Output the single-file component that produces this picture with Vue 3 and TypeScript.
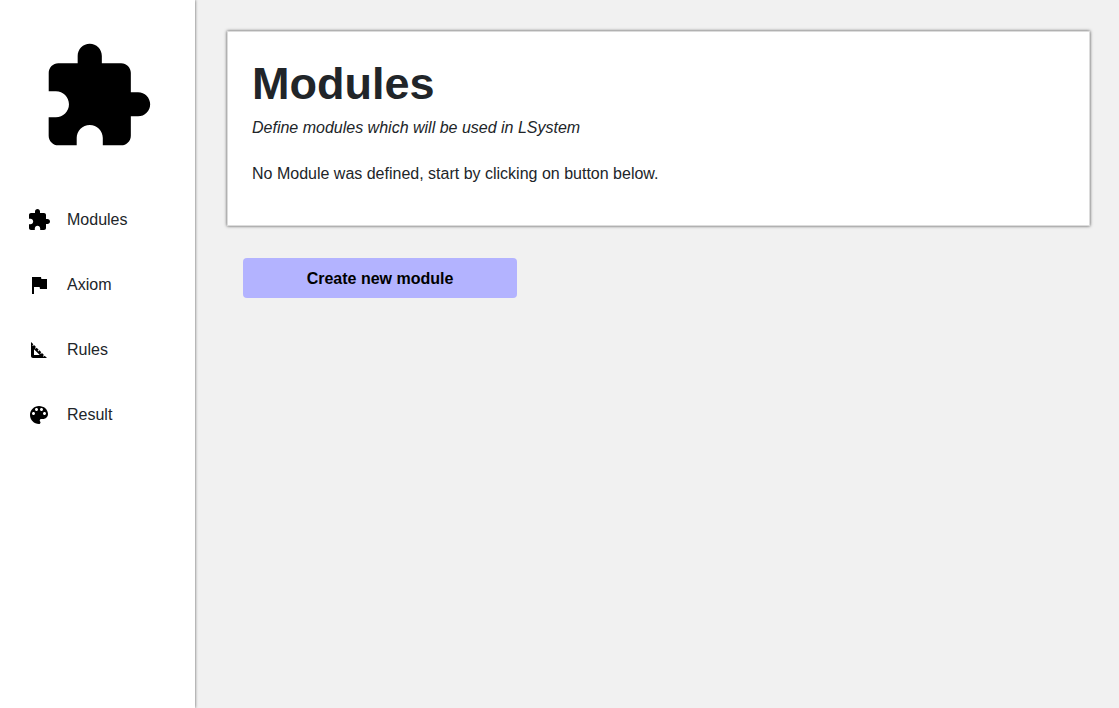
<script setup lang="ts">
interface NavItem {
  label: string
  icon: string
}

const puzzle =
  'M20.5 11H19V7c0-1.1-.9-2-2-2h-4V3.5C13 2.12 11.88 1 10.5 1S8 2.12 8 3.5V5H4c-1.1 0-1.99.9-1.99 2v3.8H3.5c1.49 0 2.7 1.21 2.7 2.7s-1.21 2.7-2.7 2.7H2V20c0 1.1.9 2 2 2h3.8v-1.5c0-1.49 1.21-2.7 2.7-2.7 1.49 0 2.7 1.21 2.7 2.7V22H17c1.1 0 2-.9 2-2v-4h1.5c1.38 0 2.5-1.12 2.5-2.5S21.88 11 20.5 11z'

const items: NavItem[] = [
  { label: 'Modules', icon: puzzle },
  { label: 'Axiom', icon: 'M14.4 6L14 4H5v17h2v-7h5.6l.4 2h7V6z' },
  {
    label: 'Rules',
    icon: 'M17.66 17.66l-1.06 1.06-.71-.71 1.06-1.06-1.94-1.94-1.06 1.06-.71-.71 1.06-1.06-1.94-1.94-1.06 1.06-.71-.71 1.06-1.06L9.7 9.7l-1.06 1.06-.71-.71 1.06-1.06-1.94-1.94-1.06 1.06-.71-.71 1.06-1.06L4 4v14c0 1.1.9 2 2 2h14l-2.34-2.34zM7 17v-5.76L12.76 17H7z',
  },
  {
    label: 'Result',
    icon: 'M12 3c-4.97 0-9 4.03-9 9s4.03 9 9 9c.83 0 1.5-.67 1.5-1.5 0-.39-.15-.74-.39-1.01-.23-.26-.38-.61-.38-.99 0-.83.67-1.5 1.5-1.5H16c2.76 0 5-2.24 5-5 0-4.42-4.03-8-9-8zm-5.5 9c-.83 0-1.5-.67-1.5-1.5S5.67 9 6.5 9 8 9.67 8 10.5 7.33 12 6.5 12zm3-4C8.67 8 8 7.33 8 6.5S8.67 5 9.5 5s1.5.67 1.5 1.5S10.33 8 9.5 8zm5 0c-.83 0-1.5-.67-1.5-1.5S13.67 5 14.5 5s1.5.67 1.5 1.5S15.33 8 14.5 8zm3 4c-.83 0-1.5-.67-1.5-1.5S16.67 9 17.5 9s1.5.67 1.5 1.5-.67 1.5-1.5 1.5z',
  },
]
</script>

<template>
  <div class="layout">
    <aside class="sidebar">
      <svg class="logo" viewBox="0 0 24 24" aria-hidden="true"><path :d="puzzle" /></svg>
      <nav class="nav">
        <a v-for="item in items" :key="item.label" class="link" href="#">
          <svg class="icon" viewBox="0 0 24 24" aria-hidden="true"><path :d="item.icon" /></svg>
          <span>{{ item.label }}</span>
        </a>
      </nav>
    </aside>
    <main class="content">
      <section class="card">
        <h1 class="title">Modules</h1>
        <p class="subtitle">Define modules which will be used in LSystem</p>
        <p class="message">No Module was defined, start by clicking on button below.</p>
      </section>
      <button class="create" type="button">Create new module</button>
    </main>
  </div>
</template>

<style>
body {
  margin: 0;
  background: #f1f1f1;
}
</style>

<style scoped>
.layout {
  display: flex;
  min-height: 100vh;
  font-family: "Liberation Sans", Arial, sans-serif;
  font-size: 16px;
  line-height: 24px;
  color: #212529;
}

.sidebar {
  flex: 0 0 195px;
  background: #fff;
  box-shadow: 0 0 3px #000000a0;
}

.logo {
  display: block;
  width: 116px;
  margin: 39px auto 32px 39px;
}

.nav {
  display: flex;
  flex-direction: column;
}

.link {
  display: flex;
  align-items: center;
  gap: 16px;
  height: 65px;
  padding-left: 27px;
  color: inherit;
  text-decoration: none;
}

.icon {
  width: 24px;
  height: 24px;
}

.content {
  flex: 1;
  min-width: 0;
  padding: 31px 29px 31px 32px;
}

.card {
  padding: 24px 24px 39px;
  background: #fff;
  border: 1px solid #dcdcdc;
  box-shadow: 0 0 3px #000000b0;
}

.title {
  margin: 0;
  font-size: 45px;
  line-height: 56px;
  font-weight: 700;
}

.subtitle {
  margin: 4px 0 22px;
  font-style: italic;
}

.message {
  margin: 0;
}

.create {
  display: block;
  width: 274px;
  height: 40px;
  margin: 32px 0 0 16px;
  padding: 2px 0 0;
  border: 0;
  border-radius: 4px;
  background: #b3b3ff;
  color: #000;
  font: inherit;
  font-weight: 700;
  cursor: pointer;
}
</style>
